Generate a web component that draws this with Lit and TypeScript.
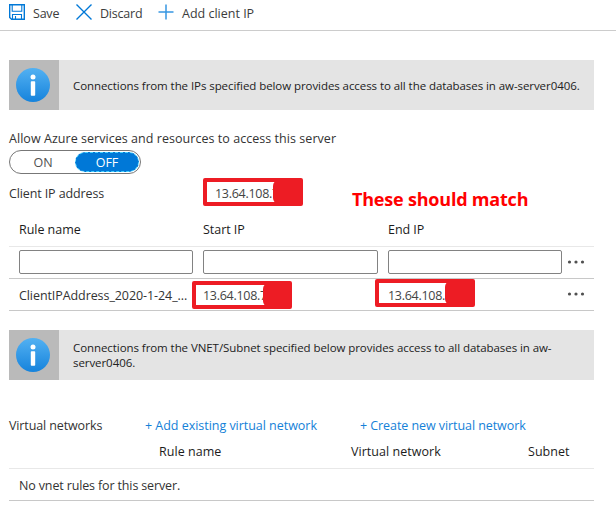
import { LitElement, html, css } from "lit";

const infoIcon = html`
  <svg class="info-icon" viewBox="0 0 34 34" width="34" height="34">
    <defs>
      <linearGradient id="g" x1="0" y1="0" x2="0" y2="1">
        <stop offset="0" stop-color="#53b1f2" />
        <stop offset="1" stop-color="#1683dc" />
      </linearGradient>
    </defs>
    <circle cx="17" cy="17" r="17" fill="url(#g)" />
    <circle cx="17" cy="9" r="2.5" fill="#fff" />
    <rect x="14.8" y="13.3" width="4.4" height="14.4" rx="0.8" fill="#fff" />
  </svg>
`;

class InfoBanner extends LitElement {
  static styles = css`
    :host { display: flex; width: 585px; height: 50px; background: #e4e4e4; }
    .side { width: 50px; flex: none; background: #bababa; display: flex; align-items: center; box-sizing: border-box; padding-left: 7px; }
    .info-icon { display: block; }
    .text { align-self: center; padding-left: 14px; flex: 1; font-size: 11.5px; line-height: 15px; letter-spacing: -0.07px; color: #222; white-space: nowrap; }
  `;
  render() {
    return html`<div class="side">${infoIcon}</div><div class="text"><slot></slot></div>`;
  }
}
customElements.define("info-banner", InfoBanner);

class MaskedIp extends LitElement {
  static styles = css`
    :host { display: block; position: relative; box-sizing: border-box; width: 100px; height: 28px; border: 4px solid #ed1c24; border-radius: 2px; background: #fff; overflow: hidden; }
    .value { display: block; line-height: 20px; padding-left: var(--inset, 8px); margin-top: var(--drop, 2px); letter-spacing: -0.28px; color: #444; white-space: nowrap; }
    .mask { position: absolute; top: -2px; bottom: -2px; right: -3px; width: var(--mask, 29px); background: #ed1c24; border-radius: 6px 0 0 6px; }
  `;
  render() {
    return html`<span class="value"><slot></slot></span><span class="mask"></span>`;
  }
}
customElements.define("masked-ip", MaskedIp);

const dots = html`
  <svg class="dots" viewBox="0 0 18 4" width="18" height="4" fill="#505050">
    <circle cx="2.5" cy="2" r="1.6" /><circle cx="9" cy="2" r="1.6" /><circle cx="15.5" cy="2" r="1.6" />
  </svg>
`;

class AppRoot extends LitElement {
  static styles = css`
    :host { display: block; position: relative; width: 616px; height: 507px; overflow: hidden; background: #fff; font: 12.5px/20px "Open Sans", "Noto Sans", sans-serif; color: #333; letter-spacing: -0.12px; white-space: nowrap; }
    svg { display: block; flex: none; }
    .toolbar { display: flex; height: 30px; border-bottom: 1px solid #ccc; padding-left: 9px; box-sizing: content-box; color: #3c3c3c; }
    .command { display: flex; padding-top: 4px; }
    .command svg { margin-right: 8px; }
    .save { width: 67px; letter-spacing: -0.22px; }
    .discard { width: 82px; letter-spacing: -0.22px; }
    .add { letter-spacing: 0; }
    .content { padding-left: 9px; width: 585px; }
    .first-banner { margin-top: 29px; }
    .allow { margin-top: 19px; letter-spacing: 0.045px; color: #333; }
    .toggle { display: flex; box-sizing: border-box; width: 132px; height: 24px; margin-top: 1px; border: 1px solid #777; border-radius: 12px; padding: 1px; color: #505050; }
    .on { width: 64px; text-align: center; line-height: 21px; }
    .off { width: 64px; height: 20px; box-sizing: border-box; border: 1px dashed #45d0ff; border-radius: 10px; background: #0078d7; color: #fff; text-align: center; line-height: 19px; }
    .client { display: flex; margin-top: 4px; height: 28px; }
    .client-label { width: 194px; padding-top: 6px; }
    .head { box-sizing: border-box; height: 41px; padding: 14px 0 0 10px; border-bottom: 1px solid #e8e8e8; color: #1c1c1c; font-weight: 500; letter-spacing: -0.04px; display: grid; grid-template-columns: 184px 185px 1fr; }
    .row { box-sizing: border-box; height: 32px; border-bottom: 1px solid #c8c8c8; padding-left: 10px; display: grid; grid-template-columns: 184px 185px 179px 1fr; }
    .field { box-sizing: border-box; margin-top: 3px; width: 174px; height: 24px; border: 1px solid #828282; border-radius: 2px; }
    .wide { width: 175px; }
    .dots { margin-top: 13px; }
    .rule { padding-top: 7px; letter-spacing: -0.08px; }
    .start { margin: 2px 0 0 -11px; --mask: 28px; --inset: 7px; --drop: 1px; }
    .end { margin: 0 0 0 -13px; --mask: 29px; --inset: 9px; --drop: 3px; }
    .second-banner { margin-top: 19px; }
    .networks { display: flex; margin-top: 36px; height: 20px; }
    .networks-label { width: 136px; }
    .link { color: #1481d8; letter-spacing: -0.03px; }
    .existing { width: 215px; }
    .create { letter-spacing: -0.07px; }
    .net-head { box-sizing: border-box; height: 33px; padding: 6px 0 0 150px; border-bottom: 1px solid #e8e8e8; color: #1c1c1c; font-weight: 500; letter-spacing: 0.04px; display: grid; grid-template-columns: 192px 177px 1fr; }
    .none { box-sizing: border-box; height: 32px; padding: 7px 0 0 10px; border-bottom: 1px solid #c8c8c8; letter-spacing: -0.14px; }
    .note { position: absolute; left: 352px; top: 186px; font: bold 18px/26px "Open Sans", sans-serif; letter-spacing: -0.2px; color: #f00; }
  `;
  render() {
    return html`
      <div class="toolbar">
        <div class="command save">
          <svg viewBox="0 0 16 16" width="16" height="16" fill="none" stroke="#0078d7" stroke-width="1.4">
            <path d="M.7.7h14.6v14.6H2.6L.7 13.4z" /><path d="M3.2 1v6.2h9.6V1M3.5 15v-4.5h9V15M6.5 12v3" stroke-width="1.1" />
          </svg>Save
        </div>
        <div class="command discard">
          <svg viewBox="0 0 16 16" width="16" height="16" fill="none" stroke="#0078d7" stroke-width="1.4"><path d="M.5.5l15 15M15.5.5l-15 15" /></svg>Discard
        </div>
        <div class="command add">
          <svg viewBox="0 0 16 16" width="16" height="16" fill="none" stroke="#3797e2" stroke-width="1.5"><path d="M8 .5v15M.5 8h15" /></svg>Add client IP
        </div>
      </div>
      <div class="content">
        <info-banner class="first-banner">Connections from the IPs specified below provides access to all the databases in aw-server0406.</info-banner>
        <div class="allow">Allow Azure services and resources to access this server</div>
        <div class="toggle"><span class="on">ON</span><span class="off">OFF</span></div>
        <div class="client"><span class="client-label">Client IP address</span><masked-ip>13.64.108.7</masked-ip></div>
        <div class="head"><span>Rule name</span><span>Start IP</span><span>End IP</span></div>
        <div class="row">
          <span class="field"></span><span class="field wide"></span><span class="field"></span>${dots}
        </div>
        <div class="row">
          <span class="rule">ClientIPAddress_2020-1-24_...</span>
          <masked-ip class="start">13.64.108.7</masked-ip>
          <masked-ip class="end">13.64.108.</masked-ip>${dots}
        </div>
        <info-banner class="second-banner">Connections from the VNET/Subnet specified below provides access to all databases in aw-<br />server0406.</info-banner>
        <div class="networks">
          <span class="networks-label">Virtual networks</span>
          <span class="link existing">+ Add existing virtual network</span>
          <span class="link create">+ Create new virtual network</span>
        </div>
        <div class="net-head"><span>Rule name</span><span>Virtual network</span><span>Subnet</span></div>
        <div class="none">No vnet rules for this server.</div>
      </div>
      <div class="note">These should match</div>
    `;
  }
}
customElements.define("app-root", AppRoot);
